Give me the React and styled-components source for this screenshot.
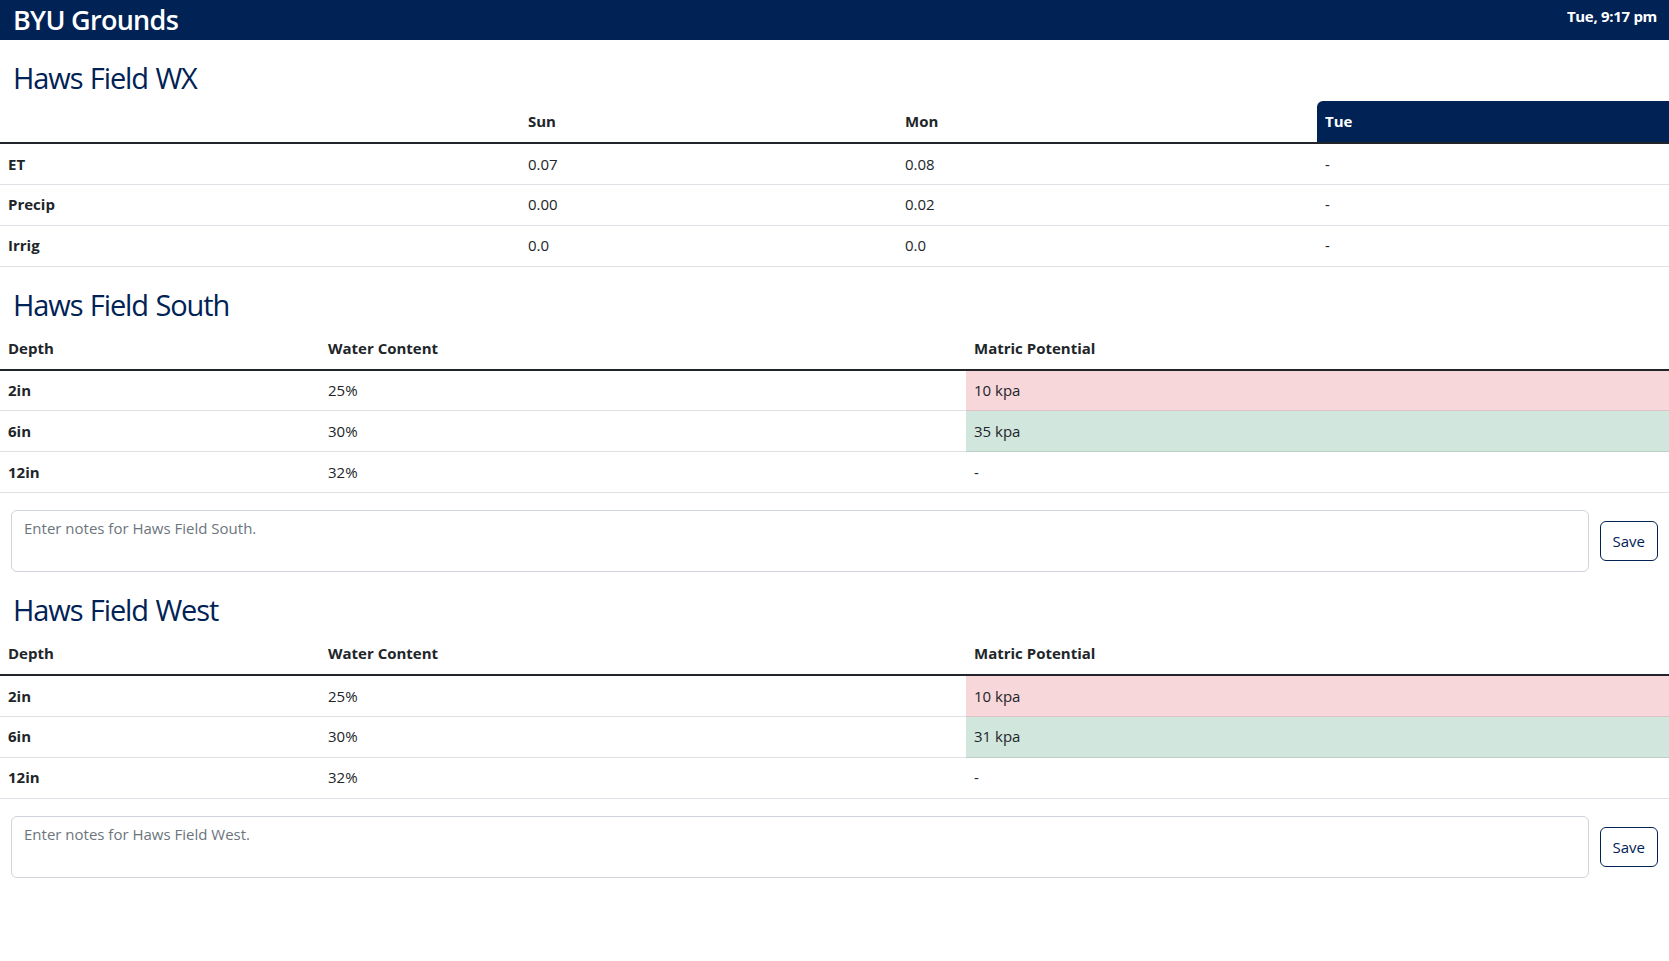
import React from "react";
import styled, { createGlobalStyle } from "styled-components";

const navy = "#002255";

const GlobalStyle = createGlobalStyle`
  * { box-sizing: border-box; }
  body {
    margin: 0;
    font-family: "Open Sans", "Noto Sans", sans-serif;
    font-size: 16px;
    line-height: 1.5;
    color: #212529;
    background: #fff;
  }
`;

const TopBar = styled.header`
  height: 40px;
  background: ${navy};
  color: #fff;
  display: flex;
  justify-content: space-between;
  align-items: flex-start;
  padding: 0 12px 0 13px;
`;

const Brand = styled.h1`
  margin: 0;
  padding-top: 4px;
  font-size: 27px;
  font-weight: 600;
  line-height: 1.2;
  letter-spacing: -0.7px;
`;

const Clock = styled.div`
  padding-top: 4px;
  font-size: 15px;
  font-weight: 700;
  line-height: 24px;
  letter-spacing: -0.3px;
`;

const Heading = styled.h2`
  margin: 19px 0 4px;
  padding-left: 13px;
  font-size: 29px;
  font-weight: 500;
  line-height: 38px;
  color: ${navy};
  letter-spacing: -1.1px;
  word-spacing: 1px;
`;

const Table = styled.table`
  width: 100%;
  border-collapse: collapse;

  th, td {
    padding: 8px;
    height: 41px;
    text-align: left;
    vertical-align: middle;
    border-bottom: 1px solid #dee2e6;
    font-size: 15px;
  }
  thead th {
    height: 42px;
    border-bottom: 2px solid #212529;
  }
  th { font-weight: 700; }
`;

const DayHead = styled.th`
  background: ${(p) => (p.$today ? navy : "transparent")};
  color: ${(p) => (p.$today ? "#fff" : "inherit")};
  border-top-left-radius: ${(p) => (p.$today ? "6px" : "0")};
`;

const Cell = styled.td`
  background: ${(p) =>
    p.$tone === "bad" ? "#f8d7da" : p.$tone === "good" ? "#d1e7dd" : "transparent"};
  border-bottom-color: ${(p) =>
    p.$tone === "bad" ? "#dfc2c4" : p.$tone === "good" ? "#bcd0c7" : "#dee2e6"} !important;
`;

const NotesRow = styled.div`
  display: flex;
  align-items: center;
  gap: 11px;
  padding: 17px 11px 0;
`;

const Notes = styled.textarea`
  flex: 1;
  height: 62px;
  padding: 6px 12px;
  font-family: inherit;
  font-size: 15px;
  line-height: 1.5;
  color: #212529;
  border: 1px solid #ced4da;
  border-radius: 6px;
  resize: none;
  &::placeholder { color: #6c757d; }
`;

const SaveButton = styled.button`
  height: 40px;
  padding: 0 12px;
  font-family: inherit;
  font-size: 15px;
  color: ${navy};
  background: #fff;
  border: 1px solid ${navy};
  border-radius: 6px;
  cursor: pointer;
`;

const wx = [
  { label: "ET", vals: ["0.07", "0.08", "-"] },
  { label: "Precip", vals: ["0.00", "0.02", "-"] },
  { label: "Irrig", vals: ["0.0", "0.0", "-"] },
];

const fields = [
  {
    name: "Haws Field South",
    rows: [
      { depth: "2in", water: "25%", kpa: "10 kpa", tone: "bad" },
      { depth: "6in", water: "30%", kpa: "35 kpa", tone: "good" },
      { depth: "12in", water: "32%", kpa: "-" },
    ],
  },
  {
    name: "Haws Field West",
    rows: [
      { depth: "2in", water: "25%", kpa: "10 kpa", tone: "bad" },
      { depth: "6in", water: "30%", kpa: "31 kpa", tone: "good" },
      { depth: "12in", water: "32%", kpa: "-" },
    ],
  },
];

function SoilField({ field }) {
  return (
    <section>
      <Heading>{field.name}</Heading>
      <Table>
        <colgroup>
          <col style={{ width: 320 }} />
          <col style={{ width: 646 }} />
          <col />
        </colgroup>
        <thead>
          <tr>
            <th>Depth</th>
            <th>Water Content</th>
            <th>Matric Potential</th>
          </tr>
        </thead>
        <tbody>
          {field.rows.map((r) => (
            <tr key={r.depth}>
              <th>{r.depth}</th>
              <td>{r.water}</td>
              <Cell $tone={r.tone}>{r.kpa}</Cell>
            </tr>
          ))}
        </tbody>
      </Table>
      <NotesRow>
        <Notes placeholder={`Enter notes for ${field.name}.`} />
        <SaveButton>Save</SaveButton>
      </NotesRow>
    </section>
  );
}

export default function App() {
  return (
    <>
      <GlobalStyle />
      <TopBar>
        <Brand>BYU Grounds</Brand>
        <Clock>Tue, 9:17 pm</Clock>
      </TopBar>

      <Heading>Haws Field WX</Heading>
      <Table>
        <colgroup>
          <col style={{ width: 520 }} />
          <col style={{ width: 377 }} />
          <col style={{ width: 420 }} />
          <col />
        </colgroup>
        <thead>
          <tr>
            <th></th>
            <DayHead>Sun</DayHead>
            <DayHead>Mon</DayHead>
            <DayHead $today>Tue</DayHead>
          </tr>
        </thead>
        <tbody>
          {wx.map((r) => (
            <tr key={r.label}>
              <th>{r.label}</th>
              {r.vals.map((v, i) => (
                <td key={i}>{v}</td>
              ))}
            </tr>
          ))}
        </tbody>
      </Table>

      {fields.map((f) => (
        <SoilField key={f.name} field={f} />
      ))}
    </>
  );
}
